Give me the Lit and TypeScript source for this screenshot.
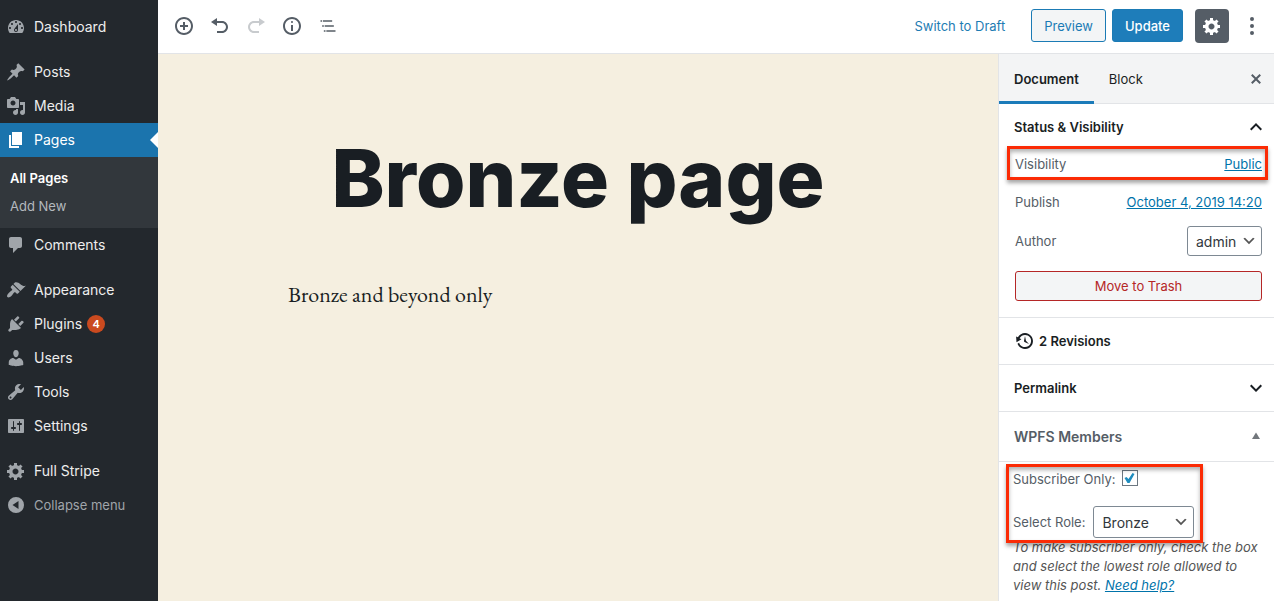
import { LitElement, html, css, svg, nothing } from "lit";
import { customElement, property, state } from "lit/decorators.js";
import { classMap } from "lit/directives/class-map.js";

const icons: Record<string, string> = {
  dashboard:
    "M3.76 16h12.48c1.1-1.37 1.76-3.11 1.76-5 0-4.42-3.58-8-8-8s-8 3.58-8 8c0 1.89.66 3.63 1.76 5zM10 4c.55 0 1 .45 1 1s-.45 1-1 1-1-.45-1-1 .45-1 1-1zM6 6c.55 0 1 .45 1 1s-.45 1-1 1-1-.45-1-1 .45-1 1-1zm8 0c.55 0 1 .45 1 1s-.45 1-1 1-1-.45-1-1 .45-1 1-1zm-5.37 5.55L12 7v6c0 1.1-.9 2-2 2s-2-.9-2-2c0-.57.24-1.08.63-1.45zM4 10c.55 0 1 .45 1 1s-.45 1-1 1-1-.45-1-1 .45-1 1-1zm12 0c.55 0 1 .45 1 1s-.45 1-1 1-1-.45-1-1 .45-1 1-1zm-5 3c0-.55-.45-1-1-1s-1 .45-1 1 .45 1 1 1 1-.45 1-1z",
  post:
    "M10.44 3.02l1.82-1.82 6.36 6.35-1.83 1.82c-1.05-.68-2.48-.57-3.41.36l-.75.75c-.92.93-1.04 2.35-.35 3.41l-1.83 1.82-2.41-2.41-2.8 2.79c-.42.42-3.38 2.71-3.8 2.29s1.86-3.39 2.28-3.81l2.79-2.79L4.1 9.36l1.83-1.82c1.05.69 2.48.57 3.4-.36l.75-.75c.93-.92 1.05-2.35.36-3.41z",
  media:
    "M13 11V4c0-.55-.45-1-1-1h-1.67L9 1H5L3.67 3H2c-.55 0-1 .45-1 1v7c0 .55.45 1 1 1h10c.55 0 1-.45 1-1zM7 4.5c1.38 0 2.5 1.12 2.5 2.5S8.38 9.5 7 9.5 4.5 8.38 4.5 7 5.62 4.5 7 4.5zM14 6h5v10.5c0 1.38-1.12 2.5-2.5 2.5S14 17.88 14 16.5s1.12-2.5 2.5-2.5c.17 0 .34.02.5.05V9h-3V6zm-4 8.05V13h2v3.5c0 1.38-1.12 2.5-2.5 2.5S7 17.88 7 16.5 8.12 14 9.5 14c.17 0 .34.02.5.05z",
  page: "M6 15V2h10v13H6zm-1 1h8v2H3V5h2v11z",
  comments:
    "M5 2h9c1.1 0 2 .9 2 2v7c0 1.1-.9 2-2 2h-2l-5 5v-5H5c-1.1 0-2-.9-2-2V4c0-1.1.9-2 2-2z",
  appearance:
    "M14.48 11.06L7.41 3.99l1.5-1.5c.5-.56 2.3-.47 3.51.32 1.21.8 1.43 1.28 2.91 2.1 1.18.64 2.45 1.26 4.45.85zm-.71.71L6.7 4.7 4.93 6.47c-.39.39-.39 1.02 0 1.41l1.06 1.06c.39.39.39 1.03 0 1.42-.6.6-1.43 1.11-2.21 1.69-.35.26-.7.53-1.01.84C1.43 14.23.4 16.08 1.4 17.07c.99 1 2.84-.03 4.18-1.36.31-.31.58-.66.85-1.02.57-.78 1.08-1.61 1.69-2.21.39-.39 1.02-.39 1.41 0l1.06 1.06c.39.39 1.02.39 1.41 0z",
  plugins:
    "M13.11 4.36L9.87 7.6 8 5.73l3.24-3.24c.35-.34 1.05-.2 1.56.32.52.51.66 1.21.31 1.55zm-8 1.77l.91-1.12 9.01 9.01-1.19.84c-.71.71-2.63 1.16-3.82 1.16H6.14L4.9 17.26c-.59.59-1.54.59-2.12 0-.59-.58-.59-1.53 0-2.12l1.24-1.24v-3.88c0-1.13.4-3.19 1.09-3.89zm7.26 3.97l3.24-3.24c.34-.35 1.04-.21 1.55.31.52.51.66 1.21.31 1.55l-3.24 3.25z",
  users:
    "M10 9.25c-2.27 0-2.73-3.44-2.73-3.44C7 4.02 7.82 2 9.97 2c2.16 0 2.98 2.02 2.71 3.81 0 0-.41 3.44-2.68 3.44zm0 2.57L12.72 10c2.39 0 4.52 2.33 4.52 4.53v2.49s-3.65 1.13-7.24 1.13c-3.65 0-7.24-1.13-7.24-1.13v-2.49c0-2.25 1.94-4.48 4.47-4.48z",
  tools:
    "M16.68 9.77c-1.34 1.34-3.3 1.67-4.95.99l-5.41 6.52c-.99.99-2.59.99-3.58 0s-.99-2.59 0-3.57l6.52-5.42c-.68-1.65-.35-3.61.99-4.95 1.28-1.28 3.12-1.62 4.72-1.06l-2.89 2.89 2.82 2.82 2.86-2.87c.53 1.58.18 3.39-1.08 4.65zM3.81 16.21c.4.39 1.04.39 1.43 0 .4-.4.4-1.04 0-1.43-.39-.4-1.03-.4-1.43 0-.39.39-.39 1.03 0 1.43z",
  settings:
    "M18 16V4c0-.55-.45-1-1-1H3c-.55 0-1 .45-1 1v12c0 .55.45 1 1 1h14c.55 0 1-.45 1-1zM8 11h1c.55 0 1 .45 1 1s-.45 1-1 1H8v1.5c0 .28-.22.5-.5.5s-.5-.22-.5-.5V13H6c-.55 0-1-.45-1-1s.45-1 1-1h1V5.5c0-.28.22-.5.5-.5s.5.22.5.5V11zm5-2h-1c-.55 0-1-.45-1-1s.45-1 1-1h1V5.5c0-.28.22-.5.5-.5s.5.22.5.5V7h1c.55 0 1 .45 1 1s-.45 1-1 1h-1v5.5c0 .28-.22.5-.5.5s-.5-.22-.5-.5V9z",
  generic:
    "M18 12h-2.18c-.17.7-.44 1.35-.81 1.93l1.54 1.54-2.1 2.1-1.54-1.54c-.58.36-1.23.63-1.91.79V19H8v-2.18c-.68-.16-1.33-.43-1.91-.79l-1.54 1.54-2.12-2.12 1.54-1.54c-.36-.58-.63-1.23-.79-1.91H1V9.03h2.17c.16-.7.44-1.35.8-1.94L2.43 5.55l2.1-2.1 1.54 1.54c.58-.37 1.24-.64 1.93-.81V2h3v2.18c.68.16 1.33.43 1.91.79l1.54-1.54 2.12 2.12-1.54 1.54c.36.59.64 1.24.8 1.94H18V12zm-8.5 1.5c1.66 0 3-1.34 3-3s-1.34-3-3-3-3 1.34-3 3 1.34 3 3 3z",
  collapse: "M10 2a8 8 0 1 0 0 16 8 8 0 0 0 0-16zM12.5 14L6.5 10l6-4z",
  insert:
    "M10 1c-5 0-9 4-9 9s4 9 9 9 9-4 9-9-4-9-9-9zm0 16c-3.9 0-7-3.1-7-7s3.1-7 7-7 7 3.1 7 7-3.1 7-7 7zm1-11H9v3H6v2h3v3h2v-3h3V9h-3V6z",
  undo: "M12 5H7V2L1 6l6 4V7h5c2.2 0 4 1.8 4 4s-1.8 4-4 4H7v2h5c3.3 0 6-2.7 6-6s-2.7-6-6-6z",
  redo: "M8 5h5V2l6 4-6 4V7H8c-2.2 0-4 1.8-4 4s1.8 4 4 4h5v2H8c-3.3 0-6-2.7-6-6s2.7-6 6-6z",
  info:
    "M9 15h2V9H9v6zm1-10c-.5 0-1 .5-1 1s.5 1 1 1 1-.5 1-1-.5-1-1-1zm0-4c-5 0-9 4-9 9s4 9 9 9 9-4 9-9-4-9-9-9zm0 16c-3.9 0-7-3.1-7-7s3.1-7 7-7 7 3.1 7 7-3.1 7-7 7z",
  outline:
    "M5 5H3v2h2V5zm3 8h11v-2H8v2zm9-8H6v2h11V5zM7 11H5v2h2v-2zm0 8h2v-2H7v2zm3-2v2h11v-2H10z",
  more:
    "M10 1a2 2 0 1 0 0 4 2 2 0 0 0 0-4zM10 8a2 2 0 1 0 0 4 2 2 0 0 0 0-4zM10 15a2 2 0 1 0 0 4 2 2 0 0 0 0-4z",
  close:
    "M14.95 6.46L11.41 10l3.54 3.54-1.41 1.41L10 11.42l-3.53 3.53-1.42-1.42L8.58 10 5.05 6.47l1.42-1.42L10 8.58l3.54-3.53z",
  backup:
    "M13.65 2.88c3.93 2.01 5.48 6.84 3.47 10.77s-6.83 5.48-10.77 3.47c-1.87-.96-3.2-2.56-3.86-4.4l1.64-1.03c.45 1.57 1.52 2.95 3.08 3.76 3.01 1.54 6.69.35 8.23-2.66 1.55-3.01.36-6.69-2.65-8.24C9.78 3.01 6.1 4.2 4.56 7.21l1.88.97-4.95 3.08-.39-5.82 1.78.91C4.9 2.4 9.75.89 13.65 2.88zm-4.36 7.83C9.11 10.53 9 10.28 9 10c0-.07.03-.12.04-.19h-.01L10 5l.97 4.81L14 13l-4.5-2.12.02-.02c-.08-.04-.16-.09-.23-.15z",
  up: "M12 8l-6 6 1.41 1.41L12 10.83l4.59 4.58L18 14z",
  down: "M7.41 8.59L12 13.17l4.59-4.58L18 10l-6 6-6-6 1.41-1.41z",
  triangle: "M6 12L10 5.5l4 6.5z",
  chevron: "M5 6l5 5 5-5 2 1-7 7-7-7 2-1z",
};

const wideIcons = new Set(["outline", "up", "down"]);

const icon = (name: string, size = 20) => {
  const box = wideIcons.has(name) ? 24 : 20;
  return html`<svg
    class="icon"
    width=${size}
    height=${size}
    viewBox="0 0 ${box} ${box}"
    fill="currentColor"
    fill-rule="evenodd"
    aria-hidden="true"
  >
    ${svg`<path d=${icons[name]}></path>`}
  </svg>`;
};

const shared = css`
  * {
    box-sizing: border-box;
  }
  .icon {
    display: block;
    flex: none;
  }
  button,
  select,
  input {
    font: inherit;
    margin: 0;
  }
  button {
    border: 0;
    padding: 0;
    background: none;
    color: inherit;
    cursor: pointer;
  }
`;

interface MenuEntry {
  label: string;
  icon: string;
  badge?: number;
  current?: boolean;
  children?: string[];
}

const menuGroups: MenuEntry[][] = [
  [{ label: "Dashboard", icon: "dashboard" }],
  [
    { label: "Posts", icon: "post" },
    { label: "Media", icon: "media" },
    { label: "Pages", icon: "page", current: true, children: ["All Pages", "Add New"] },
    { label: "Comments", icon: "comments" },
  ],
  [
    { label: "Appearance", icon: "appearance" },
    { label: "Plugins", icon: "plugins", badge: 4 },
    { label: "Users", icon: "users" },
    { label: "Tools", icon: "tools" },
    { label: "Settings", icon: "settings" },
  ],
  [{ label: "Full Stripe", icon: "generic" }],
];

@customElement("admin-menu")
class AdminMenu extends LitElement {
  static styles = [
    shared,
    css`
      :host {
        display: block;
        background: #23282d;
        color: #eee;
        font-size: 14px;
        line-height: 18px;
        padding: 10px 0;
      }
      .groups {
        display: flex;
        flex-direction: column;
        gap: 11px;
      }
      ul {
        list-style: none;
        margin: 0;
        padding: 0;
      }
      .item {
        position: relative;
        display: flex;
        align-items: center;
        width: 100%;
        height: 34px;
        padding: 0 6px;
        color: #eee;
        text-decoration: none;
      }
      .item .icon {
        margin-right: 8px;
        color: #a0a5aa;
      }
      .current {
        background: #1b74ad;
        color: #fff;
      }
      .current .icon {
        color: #fff;
      }
      .current::after {
        content: "";
        position: absolute;
        right: 0;
        top: 9px;
        border: 8px solid transparent;
        border-left: 0;
        border-right-color: #fff;
      }
      .badge {
        min-width: 18px;
        height: 18px;
        margin-left: 5px;
        border-radius: 9px;
        background: #ca4a1f;
        color: #fff;
        font-size: 11px;
        font-weight: 600;
        text-align: center;
      }
      .submenu {
        background: #32373c;
        padding: 7px 0 8px;
        font-size: 13px;
      }
      .submenu a {
        display: block;
        padding: 5px 10px;
        color: #b4b9be;
        text-decoration: none;
      }
      .submenu .active {
        color: #fff;
        font-weight: 600;
      }
      .collapse {
        color: #a0a5aa;
        font-size: 13px;
      }
    `,
  ];

  render() {
    return html`<nav aria-label="Main menu">
      <div class="groups">
        ${menuGroups.map(
          (group) => html`<ul>
            ${group.map(
              (entry) => html`<li>
                <a class=${classMap({ item: true, current: !!entry.current })} href="#">
                  ${icon(entry.icon)}<span>${entry.label}</span>
                  ${entry.badge ? html`<span class="badge">${entry.badge}</span>` : nothing}
                </a>
                ${entry.children
                  ? html`<ul class="submenu">
                      ${entry.children.map(
                        (child, i) =>
                          html`<li><a class=${classMap({ active: i === 0 })} href="#">${child}</a></li>`
                      )}
                    </ul>`
                  : nothing}
              </li>`
            )}
          </ul>`
        )}
      </div>
      <button class="item collapse" type="button">${icon("collapse")}<span>Collapse menu</span></button>
    </nav>`;
  }
}

@customElement("editor-toolbar")
class EditorToolbar extends LitElement {
  static styles = [
    shared,
    css`
      :host {
        display: flex;
        justify-content: space-between;
        align-items: center;
        height: 54px;
        padding: 0 4px 2px 8px;
        background: #fff;
        border-bottom: 1px solid #e2e4e7;
        color: #555d66;
        font-size: 13px;
      }
      .tools,
      .actions {
        display: flex;
        align-items: center;
      }
      .tool {
        display: grid;
        place-items: center;
        width: 36px;
        height: 36px;
      }
      .tool:disabled {
        color: #c8cbce;
      }
      .link {
        color: #1e7cb3;
        margin-right: 26px;
      }
      .preview,
      .update {
        height: 33px;
        padding: 0 12px;
        border: 1px solid #1b7bb5;
        border-radius: 3px;
      }
      .preview {
        background: #f3f5f6;
        color: #1b7bb5;
        margin-right: 6px;
      }
      .update {
        background: #1e7dba;
        color: #fff;
        font-weight: 500;
        margin-right: 12px;
      }
      .gear {
        display: grid;
        place-items: center;
        width: 34px;
        height: 34px;
        border-radius: 4px;
        background: #555d66;
        color: #fff;
        margin-right: 5px;
      }
    `,
  ];

  render() {
    return html`
      <div class="tools">
        <button class="tool" type="button" aria-label="Add block">${icon("insert")}</button>
        <button class="tool" type="button" aria-label="Undo">${icon("undo")}</button>
        <button class="tool" type="button" aria-label="Redo" disabled>${icon("redo")}</button>
        <button class="tool" type="button" aria-label="Content structure">${icon("info")}</button>
        <button class="tool" type="button" aria-label="Block navigation">${icon("outline")}</button>
      </div>
      <div class="actions">
        <button class="link" type="button">Switch to Draft</button>
        <button class="preview" type="button">Preview</button>
        <button class="update" type="button">Update</button>
        <button class="gear" type="button" aria-label="Settings">${icon("generic")}</button>
        <button class="tool" type="button" aria-label="More options">${icon("more")}</button>
      </div>
    `;
  }
}

@customElement("settings-panel")
class SettingsPanel extends LitElement {
  @property() author = "admin";
  @state() private subscriberOnly = true;

  static styles = [
    shared,
    css`
      :host {
        display: block;
        background: #fff;
        border-left: 1px solid #e2e4e7;
        color: #555d66;
        font-size: 13px;
        line-height: 19px;
      }
      a {
        color: #0073aa;
      }
      .tabs {
        display: flex;
        height: 50px;
        background: #f3f4f5;
        border-bottom: 1px solid #e2e4e7;
        color: #191e23;
      }
      .tab {
        margin-bottom: -1px;
        padding: 3px 15px 0;
        border-bottom: 3px solid transparent;
      }
      .selected {
        font-weight: 600;
        border-bottom-color: #1b7bb9;
      }
      .close {
        margin-left: auto;
        padding: 0 8px;
        color: #555d66;
      }
      .section {
        border-bottom: 1px solid #e2e4e7;
      }
      .heading {
        display: flex;
        align-items: center;
        justify-content: space-between;
        width: 100%;
        height: 46px;
        padding: 0 6px 0 15px;
        color: #191e23;
        font-weight: 600;
      }
      .metabox {
        height: 49px;
        padding-right: 8px;
        color: #555d66;
        font-size: 14px;
      }
      .metabox .icon {
        color: #72777c;
      }
      .revisions {
        justify-content: flex-start;
        gap: 4px;
        padding-left: 16px;
      }
      .body {
        display: flex;
        flex-direction: column;
        gap: 17px;
        padding: 2px 12px 16px 16px;
      }
      .row {
        position: relative;
        display: flex;
        align-items: center;
        justify-content: space-between;
      }
      .rows {
        display: flex;
        flex-direction: column;
        gap: 14px;
      }
      .line {
        height: 24px;
      }
      .author {
        height: 26px;
      }
      .mark::after {
        content: "";
        position: absolute;
        inset: -6px -6px -4px -8px;
        border: 3px solid #fb2b05;
        box-shadow: 0 3px 4px rgba(0, 0, 0, 0.35), inset 0 3px 4px rgba(0, 0, 0, 0.3);
        pointer-events: none;
      }
      .picker {
        position: relative;
        display: inline-flex;
        align-items: center;
        color: #32373c;
      }
      .picker select {
        appearance: none;
        height: 30px;
        padding: 0 24px 0 8px;
        border: 1px solid #7e8993;
        border-radius: 3px;
        background: #fff;
        color: #32373c;
        font-size: 14px;
      }
      .picker .icon {
        position: absolute;
        right: 5px;
        pointer-events: none;
        color: #555;
      }
      .trash {
        height: 30px;
        border: 1px solid #b52727;
        border-radius: 3px;
        background: #f3f5f6;
        color: #b52727;
      }
      .members {
        padding: 8px 14px 0;
      }
      .fields {
        position: relative;
        display: grid;
        justify-items: start;
        gap: 17px;
        width: fit-content;
      }
      .fields::after {
        inset: -6px -9px -5px -7px;
      }
      .field {
        display: flex;
        align-items: center;
        gap: 8px;
      }
      .role select {
        width: 101px;
        height: 32px;
      }
      .check-field {
        align-items: flex-start;
        gap: 6px;
      }
      .check {
        appearance: none;
        width: 16px;
        height: 16px;
        border: 1px solid #6c7781;
        background: #fff;
      }
      .check:checked::before {
        content: "";
        display: block;
        width: 14px;
        height: 14px;
        background: #1e8cbe;
        clip-path: polygon(2px 7px, 4px 6px, 6px 8px, 10px 2px, 12px 3px, 7px 12px, 5px 12px);
      }
      .help {
        margin: 0;
        color: #555;
        font-style: italic;
      }
    `,
  ];

  render() {
    return html`
      <div class="tabs" role="tablist">
        <button class="tab selected" type="button" role="tab" aria-selected="true">Document</button>
        <button class="tab" type="button" role="tab" aria-selected="false">Block</button>
        <button class="close" type="button" aria-label="Close settings">${icon("close")}</button>
      </div>
      <div class="section">
        <button class="heading" type="button" aria-expanded="true">
          <span>Status &amp; Visibility</span>${icon("up", 24)}
        </button>
        <div class="body">
          <div class="rows">
            <div class="row line mark"><span>Visibility</span><a href="#">Public</a></div>
            <div class="row line"><span>Publish</span><a href="#">October 4, 2019 14:20</a></div>
            <div class="row author">
              <label for="author">Author</label>
              <span class="picker">
                <select id="author"><option>${this.author}</option></select>
                ${icon("chevron", 16)}
              </span>
            </div>
          </div>
          <button class="trash" type="button">Move to Trash</button>
        </div>
      </div>
      <div class="section">
        <button class="heading revisions" type="button">${icon("backup")}<span>2 Revisions</span></button>
      </div>
      <div class="section">
        <button class="heading" type="button" aria-expanded="false">
          <span>Permalink</span>${icon("down", 24)}
        </button>
      </div>
      <div class="section">
        <button class="heading metabox" type="button" aria-expanded="true">
          <span>WPFS Members</span>${icon("triangle")}
        </button>
      </div>
      <div class="members">
        <div class="fields mark">
          <div class="field check-field">
            <label for="subscriber">Subscriber Only:</label>
            <input
              id="subscriber"
              class="check"
              type="checkbox"
              .checked=${this.subscriberOnly}
              @change=${(e: Event) => (this.subscriberOnly = (e.target as HTMLInputElement).checked)}
            />
          </div>
          <div class="field">
            <label for="role">Select Role:</label>
            <span class="picker role">
              <select id="role"><option>Bronze</option></select>
              ${icon("chevron", 16)}
            </span>
          </div>
        </div>
        <p class="help">
          To make subscriber only, check the box and select the lowest role allowed to view this post.
          <a href="#">Need help?</a>
        </p>
      </div>
    `;
  }
}

@customElement("app-root")
class AppRoot extends LitElement {
  static styles = [
    shared,
    css`
      :host {
        display: grid;
        grid-template-columns: 158px minmax(0, 1fr);
        min-height: 100vh;
        font-family: Inter, "Liberation Sans", sans-serif;
      }
      .editor {
        display: grid;
        grid-template-columns: minmax(0, 1fr) 276px;
        grid-template-rows: auto 1fr;
      }
      .toolbar {
        grid-column: 1 / -1;
      }
      .canvas {
        background: #f5efe0;
        color: #191e23;
        padding: 72px 24px;
      }
      .content {
        max-width: 580px;
        margin: 0 auto;
      }
      h1 {
        margin: 0 0 50px;
        font-size: 80px;
        font-weight: 800;
        line-height: 104px;
        text-align: center;
        white-space: nowrap;
      }
      p {
        margin: 0;
        font-family: "EB Garamond", "Liberation Serif", serif;
        font-size: 22px;
        line-height: 30px;
      }
    `,
  ];

  render() {
    return html`
      <admin-menu></admin-menu>
      <div class="editor">
        <editor-toolbar class="toolbar"></editor-toolbar>
        <main class="canvas">
          <div class="content">
            <h1>Bronze page</h1>
            <p>Bronze and beyond only</p>
          </div>
        </main>
        <settings-panel></settings-panel>
      </div>
    `;
  }
}
